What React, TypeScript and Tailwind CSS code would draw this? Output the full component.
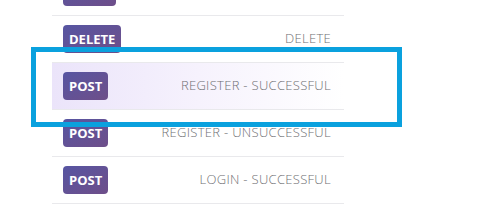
const rows = [
  { method: "", label: "", badgeWidth: "w-[53px]" },
  { method: "DELETE", label: "DELETE" },
  { method: "POST", label: "REGISTER - SUCCESSFUL", active: true },
  { method: "POST", label: "REGISTER - UNSUCCESSFUL" },
  { method: "POST", label: "LOGIN - SUCCESSFUL" },
];

export default function App() {
  return (
    <div
      className="relative h-[206px] w-[489px] overflow-hidden bg-white"
      style={{ fontFamily: "'Open Sans', 'Noto Sans', sans-serif" }}
    >
      <ul className="ml-[52px] mt-[-31px] w-[292px]">
        {rows.map((r, i) => (
          <li
            key={i}
            className={`flex h-[47px] items-center justify-between border-b border-[#e9e9ec] pl-[11px] pr-[13px] ${
              r.active ? "bg-gradient-to-r from-[#ebe4fa] via-[#f6f2fd] to-white" : ""
            }`}
          >
            <span
              className={`flex h-[28px] items-center justify-center rounded-[4px] bg-gradient-to-br from-[#5655a2] to-[#6e4e89] px-[6px] text-[13px] font-bold leading-none text-white ${
                r.badgeWidth ?? ""
              }`}
            >
              {r.method}
            </span>
            <span className="text-[13px] font-light tracking-[0.3px] text-[#6f6f74]">{r.label}</span>
          </li>
        ))}
      </ul>
      <div className="absolute left-[31px] top-[47px] h-[80px] w-[371px] border-[5px] border-[#0aa1de]" />
    </div>
  );
}
